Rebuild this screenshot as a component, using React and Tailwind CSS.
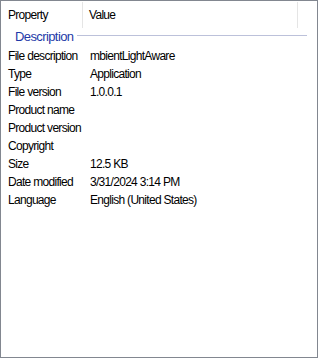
import React from 'react';

const rows = [
  ['File description', 'mbientLightAware'],
  ['Type', 'Application'],
  ['File version', '1.0.0.1'],
  ['Product name', ''],
  ['Product version', ''],
  ['Copyright', ''],
  ['Size', '12.5 KB'],
  ['Date modified', '3/31/2024 3:14 PM'],
  ['Language', 'English (United States)'],
];

const App = () => {
  return (
    <div
      className="w-[318px] h-[358px] bg-white border border-[#828790] text-[12px] text-black tracking-[-0.7px] overflow-hidden"
      style={{ fontFamily: '"Liberation Sans", Arial, sans-serif' }}
    >
      {/* Header */}
      <div className="flex h-[26px] items-center">
        <div className="w-[82px] h-full flex items-center pl-[7px] border-r border-[#e5e5e5] mt-[1px]">Property</div>
        <div className="w-[215px] h-full flex items-center pl-[6px] border-r border-[#e5e5e5] mt-[1px]">Value</div>
      </div>

      {/* Group header */}
      <div className="flex items-center h-[19px] pl-[14px] pr-[10px]">
        <span className="text-[#1e3aa8] text-[13px] tracking-[-0.6px]">Description</span>
        <div className="flex-1 h-px bg-[#bcc1da] ml-[4px] mt-[-2px]"></div>
      </div>

      {/* Rows */}
      <div className="flex flex-col mt-[1px]">
        {rows.map(([k, v], idx) => (
          <div key={idx} className="flex h-[18px] items-center">
            <div className="w-[83px] pl-[7px] whitespace-nowrap">{k}</div>
            <div className="pl-[6px] whitespace-nowrap">{v}</div>
          </div>
        ))}
      </div>
    </div>
  );
};

export default App;
